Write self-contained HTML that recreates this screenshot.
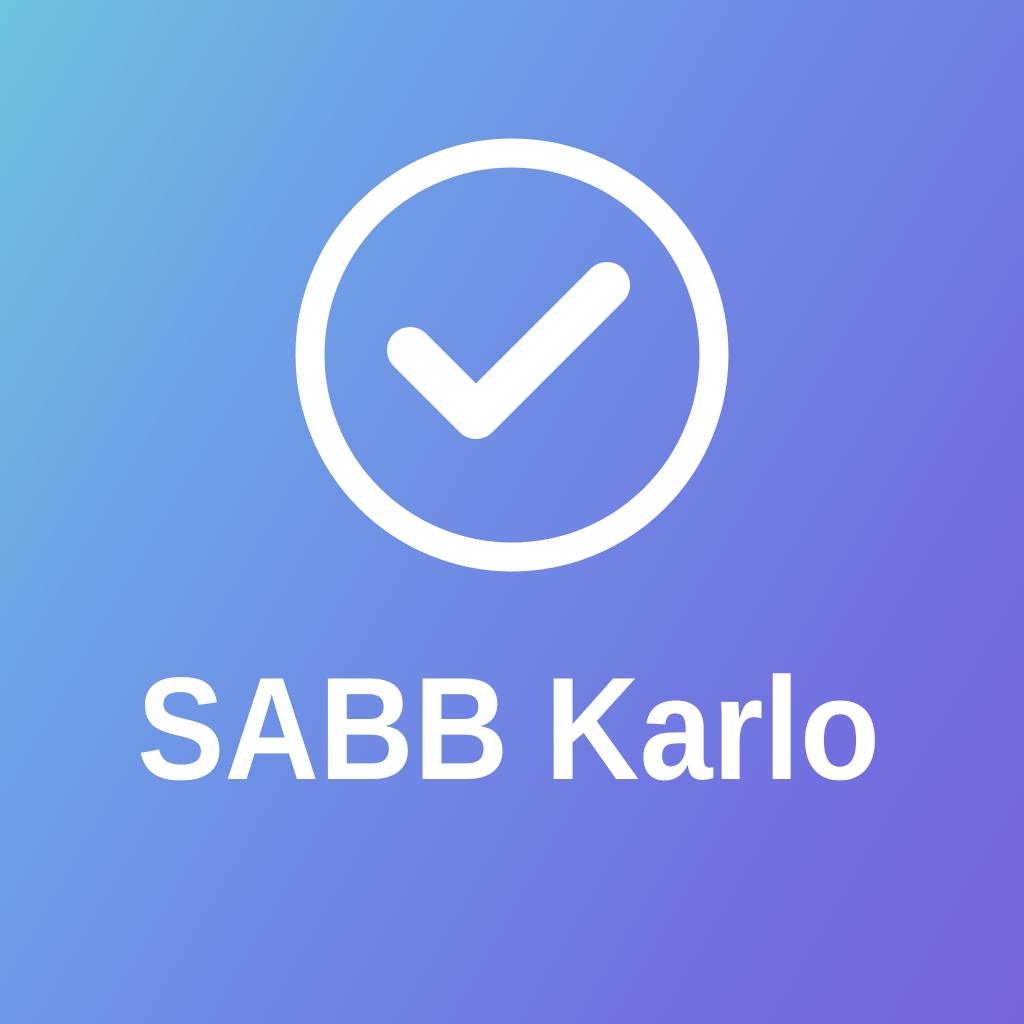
<!DOCTYPE html>
<html><head><style>
html,body{margin:0;padding:0;width:1024px;height:1024px;overflow:hidden}
body{background:linear-gradient(120deg,#6fc4de 0%,#6da3e6 25%,#6f88e4 52%,#7270e0 78%,#7664db 100%)}
</style></head><body>
<svg width="1024" height="1024" viewBox="0 0 1024 1024" style="position:absolute;left:0;top:0">
<circle cx="512" cy="355" r="202" fill="none" stroke="#fff" stroke-width="29"/>
<polyline points="410,350 476,416 607,285" fill="none" stroke="#fff" stroke-width="46" stroke-linecap="round" stroke-linejoin="round"/>
<text x="137" y="779" font-family="Liberation Sans, sans-serif" font-weight="bold" font-size="146" fill="#fff" textLength="743" lengthAdjust="spacingAndGlyphs">SABB Karlo</text>
</svg>
</body></html>
